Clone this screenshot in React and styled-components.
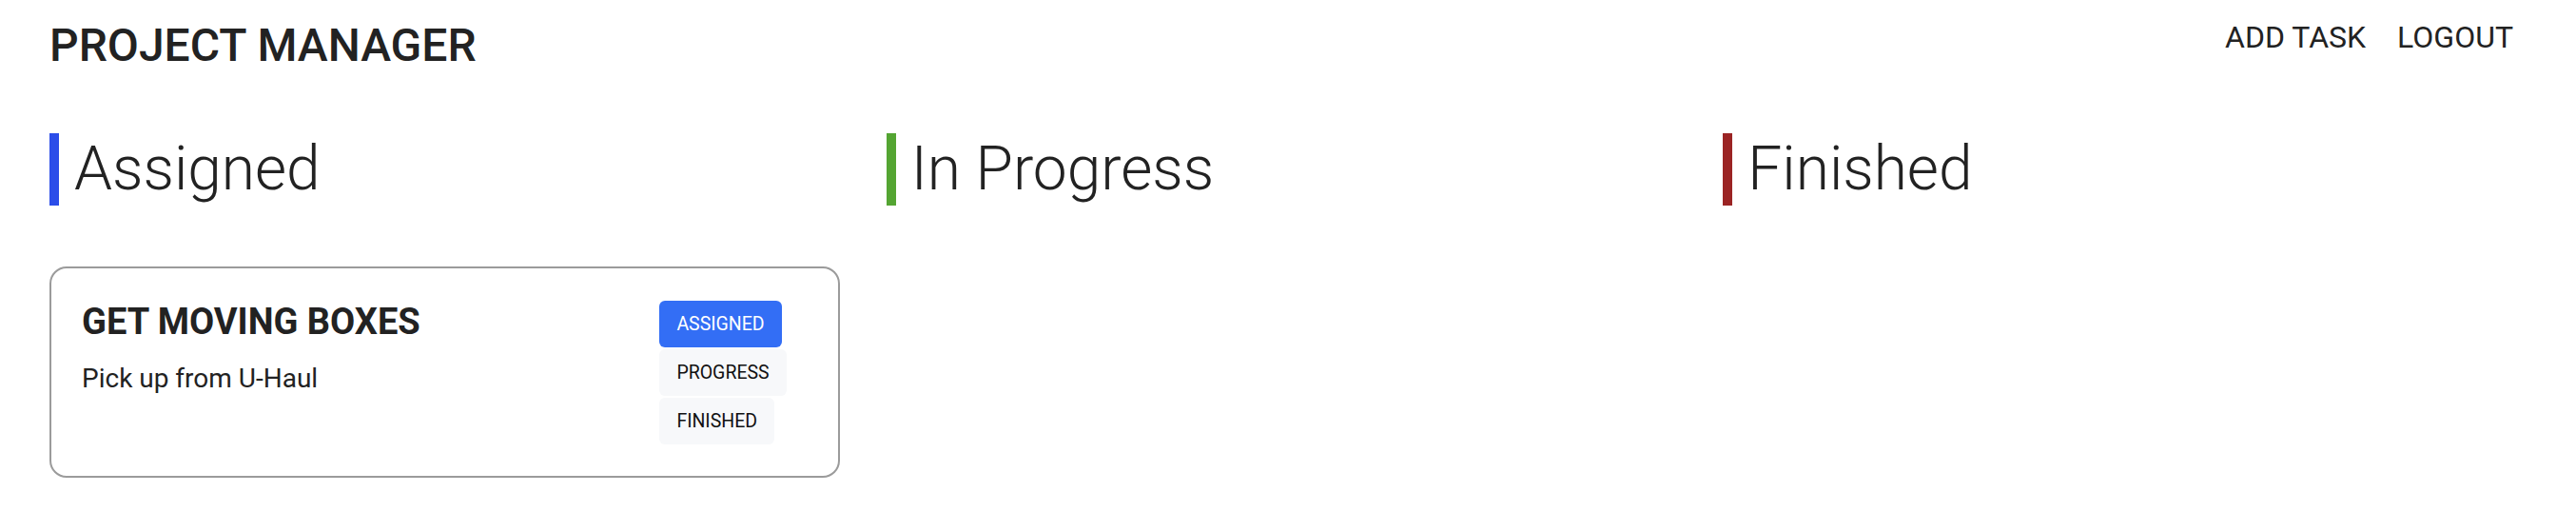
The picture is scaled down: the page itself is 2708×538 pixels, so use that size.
import React from 'react';
import styled, { createGlobalStyle } from 'styled-components';

const GlobalStyle = createGlobalStyle`
  body {
    margin: 0;
    background: #fff;
    color: #222;
    font-family: Roboto, "Liberation Sans", sans-serif;
  }
`;

// 페이지 전체
const Page = styled.div`
  padding: 20px 66px 40px 52px;
`;

const Header = styled.header`
  display: flex;
  justify-content: space-between;
  align-items: flex-start;
`;

const Brand = styled.h1`
  margin: 0;
  font-size: 48px;
  font-weight: 500;
  line-height: 56px;
`;

const Nav = styled.nav`
  display: flex;
  gap: 33px;
`;

const NavLink = styled.span`
  font-size: 32px;
  line-height: 38px;
  cursor: pointer;
`;

const Board = styled.main`
  display: grid;
  grid-template-columns: repeat(3, 1fr);
  column-gap: 49px;
  margin-top: 64px;
`;

const Column = styled.section`
  display: flex;
  flex-direction: column;
`;

const ColumnTitle = styled.h2`
  margin: 0;
  font-size: 64px;
  font-weight: 300;
  line-height: 76px;
  padding-left: 16px;
  border-left: 10px solid ${(p) => p.$color};
`;

const Card = styled.div`
  margin-top: 64px;
  border: 2px solid #9b9b9b;
  border-radius: 18px;
  padding: 34px 54px 33px 32px;
  display: flex;
  justify-content: space-between;
  align-items: flex-start;
`;

const CardBody = styled.div`
  display: flex;
  flex-direction: column;
`;

const CardTitle = styled.h3`
  margin: 0;
  font-size: 38px;
  font-weight: 700;
  line-height: 44px;
`;

const CardText = styled.p`
  margin: 21px 0 0;
  font-size: 28px;
  line-height: 33px;
`;

const StatusList = styled.div`
  display: flex;
  flex-direction: column;
  align-items: flex-start;
  gap: 2px;
`;

const StatusButton = styled.button`
  border: none;
  border-radius: 6px;
  padding: 12px 18px;
  font-family: Roboto, "Liberation Sans", sans-serif;
  font-size: 19.5px;
  line-height: 25px;
  cursor: pointer;
  background: ${(p) => (p.$active ? '#336ef5' : '#f7f8fa')};
  color: ${(p) => (p.$active ? '#fff' : '#111')};
`;

const columns = [
  { key: 'assigned', title: 'Assigned', color: '#2b4de9' },
  { key: 'progress', title: 'In Progress', color: '#54a532' },
  { key: 'finished', title: 'Finished', color: '#9b2424' },
];

const tasks = [
  { id: 1, title: 'GET MOVING BOXES', text: 'Pick up from U-Haul', status: 'assigned' },
];

const statuses = [
  { key: 'assigned', label: 'ASSIGNED' },
  { key: 'progress', label: 'PROGRESS' },
  { key: 'finished', label: 'FINISHED' },
];

function App() {
  return (
    <>
      <GlobalStyle />
      <Page>
        <Header>
          <Brand>PROJECT MANAGER</Brand>
          <Nav>
            <NavLink>ADD TASK</NavLink>
            <NavLink>LOGOUT</NavLink>
          </Nav>
        </Header>
        <Board>
          {columns.map((col) => (
            <Column key={col.key}>
              <ColumnTitle $color={col.color}>{col.title}</ColumnTitle>
              {tasks
                .filter((t) => t.status === col.key)
                .map((task) => (
                  <Card key={task.id}>
                    <CardBody>
                      <CardTitle>{task.title}</CardTitle>
                      <CardText>{task.text}</CardText>
                    </CardBody>
                    <StatusList>
                      {statuses.map((s) => (
                        <StatusButton key={s.key} $active={s.key === task.status}>
                          {s.label}
                        </StatusButton>
                      ))}
                    </StatusList>
                  </Card>
                ))}
            </Column>
          ))}
        </Board>
      </Page>
    </>
  );
}

export default App;
